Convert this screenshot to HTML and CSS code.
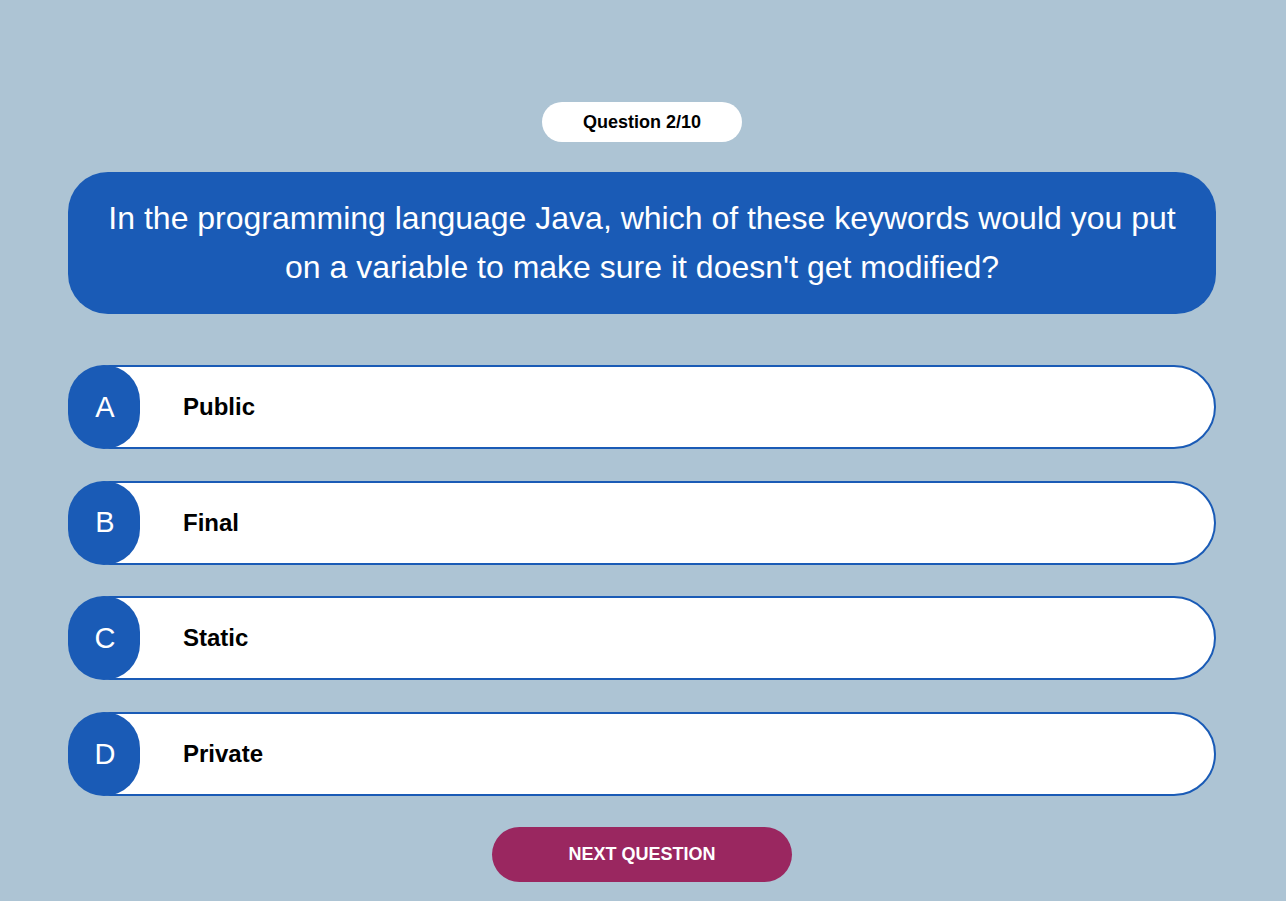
FILE: index.html
```html
<!DOCTYPE html>
<html lang="en">
<head>
<meta charset="utf-8">
<title>Quiz</title>
<link rel="stylesheet" href="styles.css">
</head>
<body>
<main class="quiz">
  <div class="counter">Question 2/10</div>
  <div class="question">In the programming language Java, which of these keywords would you put on a variable to make sure it doesn't get modified?</div>
  <ul class="options">
    <li class="option"><span class="letter">A</span><span class="label">Public</span></li>
    <li class="option"><span class="letter">B</span><span class="label">Final</span></li>
    <li class="option"><span class="letter">C</span><span class="label">Static</span></li>
    <li class="option"><span class="letter">D</span><span class="label">Private</span></li>
  </ul>
  <button class="next">NEXT QUESTION</button>
</main>
</body>
</html>
```
FILE: styles.css
```css
html, body {
  margin: 0;
  padding: 0;
  background: #adc4d4;
  font-family: "Liberation Sans", Arial, sans-serif;
}
.quiz {
  display: flex;
  flex-direction: column;
  align-items: center;
  padding: 102px 70px 0 68px;
}
.counter {
  width: 200px;
  height: 40px;
  background: #fff;
  border-radius: 20px;
  display: flex;
  align-items: center;
  justify-content: center;
  font-weight: bold;
  font-size: 18px;
  color: #000;
}
.question {
  margin-top: 30px;
  align-self: stretch;
  background: #1a5bb6;
  color: #fff;
  border-radius: 40px;
  padding: 22px 30px;
  font-size: 32px;
  line-height: 49px;
  text-align: center;
}
.options {
  list-style: none;
  margin: 51px 0 0;
  padding: 0;
  align-self: stretch;
  display: flex;
  flex-direction: column;
  gap: 31.7px;
}
.option {
  height: 80px;
  background: #fff;
  border: 2px solid #1a5bb6;
  border-radius: 42px;
  display: flex;
  align-items: stretch;
}
.letter {
  width: 72px;
  box-sizing: border-box;
  padding-left: 2px;
  margin: -2px 0 -2px -2px;
  background: #1a5bb6;
  color: #fff;
  border-radius: 40px;
  display: flex;
  align-items: center;
  justify-content: center;
  font-size: 29px;
}
.label {
  display: flex;
  align-items: center;
  padding-left: 43px;
  font-weight: bold;
  font-size: 24px;
  color: #000;
}
.next {
  margin-top: 31px;
  width: 300px;
  height: 55px;
  border: none;
  border-radius: 28px;
  background: #9a2760;
  color: #fff;
  font-family: "Liberation Sans", Arial, sans-serif;
  font-weight: bold;
  font-size: 18px;
  cursor: pointer;
}
```
